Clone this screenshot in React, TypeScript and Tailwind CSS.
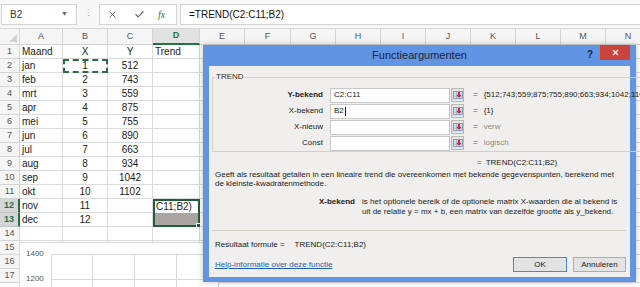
import { X, Check } from "lucide-react";

const COLS = ["A", "B", "C", "D", "E", "F", "G", "H", "I", "J", "K", "L", "M", "N"];

// Maand / X / Y / Trend
const data: string[][] = [
  ["Maand", "X", "Y", "Trend"],
  ["jan", "1", "512"],
  ["feb", "2", "743"],
  ["mrt", "3", "559"],
  ["apr", "4", "875"],
  ["mei", "5", "755"],
  ["jun", "6", "890"],
  ["jul", "7", "663"],
  ["aug", "8", "934"],
  ["sep", "9", "1042"],
  ["okt", "10", "1102"],
  ["nov", "11", ""],
  ["dec", "12", ""],
];

const args = [
  { label: "Y-bekend", value: "C2:C11", result: "{512;743;559;875;755;890;663;934;1042;1102}", bold: true, muted: false },
  { label: "X-bekend", value: "B2", result: "{1}", bold: false, muted: false },
  { label: "X-nieuw", value: "", result: "verw", bold: false, muted: true },
  { label: "Const", value: "", result: "logisch", bold: false, muted: true },
];

function RangeButton() {
  return (
    <div className="ml-[1px] w-[13px] h-[14px] border border-[#b9b9b9] bg-[#e6e6e6] flex items-center justify-center shrink-0">
      <svg width="10" height="10" viewBox="0 0 10 10">
        <rect x="0.5" y="1.5" width="9" height="7" fill="#dfe8f5" stroke="#6b86b3" strokeWidth="0.8" />
        <line x1="0.5" y1="4" x2="9.5" y2="4" stroke="#8aa0c4" strokeWidth="0.6" />
        <line x1="0.5" y1="6.3" x2="9.5" y2="6.3" stroke="#8aa0c4" strokeWidth="0.6" />
        <line x1="3.5" y1="1.5" x2="3.5" y2="8.5" stroke="#8aa0c4" strokeWidth="0.6" />
        <path d="M5 2 L5 5 L3.5 5 L6 8 L8.5 5 L7 5 L7 2 Z" fill="#d8262b" />
      </svg>
    </div>
  );
}

function Sheet() {
  const rows = Array.from({ length: 17 }, (_, i) => i + 1);
  return (
    <div className="grid grid-cols-[20px_43px_45px_45px_47px_45px_46px_45px_45px_45px_45px_45px_45px_45px_45px] font-['Liberation_Sans',Arial,sans-serif]">
      {/* header row */}
      <div className="h-[16px] bg-[#f5f5f5] border-r border-b border-[#d4d4d4] relative">
        <div className="absolute right-[2px] bottom-[2px] w-0 h-0 border-l-[8px] border-l-transparent border-b-[8px] border-b-[#d0d0d0]" />
      </div>
      {COLS.map((c) =>
        c === "D" ? (
          <div key={c} className="h-[16px] bg-[#e1e1e1] border-r border-[#d4d4d4] border-b-2 border-b-[#217346] text-[9px] text-[#217346] font-bold flex items-center justify-center">
            {c}
          </div>
        ) : (
          <div key={c} className="h-[16px] bg-[#f5f5f5] border-r border-b border-[#d4d4d4] text-[9px] text-[#555] flex items-center justify-center">
            {c}
          </div>
        )
      )}

      {rows.map((r) => {
        const row = data[r - 1] || [];
        const sel = r === 12 || r === 13;
        return [
          <div
            key={`h${r}`}
            className={
              sel
                ? "h-[14px] bg-[#d6d6d6] border-b border-[#c6c6c6] border-r-2 border-r-[#217346] text-[9px] text-[#217346] font-bold flex items-center justify-center"
                : "h-[14px] bg-[#f5f5f5] border-r border-b border-[#d4d4d4] text-[9px] text-[#555] flex items-center justify-center"
            }
          >
            {r}
          </div>,
          ...COLS.map((c, ci) => {
            const v = row[ci] ?? "";
            let cls = "h-[14px] border-r border-b border-[#dadada] bg-white text-[10px] text-[#222] leading-[13px] px-[2px] whitespace-nowrap overflow-visible relative";
            if (ci === 1 || ci === 2) cls += " text-center";
            if (r === 2 && c === "B") cls += " outline-2 outline-dashed outline-[#2f6b45] -outline-offset-2";
            if (c === "D" && r === 12) {
              return (
                <div key={`${r}${c}`} className="h-[14px] bg-white border-2 border-b-0 border-[#1f5f3a] text-[10px] text-[#222] leading-[12px] px-[1px] whitespace-nowrap">
                  C11;B2)
                </div>
              );
            }
            if (c === "D" && r === 13) {
              return (
                <div key={`${r}${c}`} className="h-[14px] bg-[#aaa5a1] border-2 border-t-0 border-[#1f5f3a] relative">
                  <div className="absolute -right-[3px] -bottom-[3px] w-[5px] h-[5px] bg-[#1f5f3a] border border-white" />
                </div>
              );
            }
            return (
              <div key={`${r}${c}`} className={cls}>
                {v}
              </div>
            );
          }),
        ];
      })}
    </div>
  );
}

function Chart() {
  return (
    <div className="absolute left-[19px] top-[242px] w-[200px] h-[45px] bg-white border-l border-t border-[#d9d9d9]">
      <svg width="200" height="45" className="font-['Liberation_Sans',Arial,sans-serif]">
        <text x="6" y="13" fontSize="8" fill="#555">1400</text>
        <text x="6" y="38" fontSize="8" fill="#555">1200</text>
        <line x1="31" y1="11.5" x2="200" y2="11.5" stroke="#d9d9d9" />
        <line x1="31" y1="36.5" x2="200" y2="36.5" stroke="#d9d9d9" />
        {[31, 72, 114, 156, 198].map((x) => (
          <line key={x} x1={x + 0.5} y1="11" x2={x + 0.5} y2="45" stroke="#d9d9d9" />
        ))}
      </svg>
    </div>
  );
}

function Dialog() {
  return (
    <div className="absolute left-[203px] top-[45px] w-[433px] h-[237px] bg-[#6195e3] px-[6px] pb-[5px] flex flex-col font-['Liberation_Sans',Arial,sans-serif] shadow-[0_0_6px_rgba(0,0,0,0.25)]">
      {/* title bar */}
      <div className="h-[21px] relative flex items-center justify-center shrink-0">
        <span className="text-[11px] text-[#1b2433]">Functieargumenten</span>
        <div className="absolute right-0 top-0 flex items-start">
          <span className="text-[10px] font-bold text-[#1b2433] mr-[7px] mt-[2px]">?</span>
          <div className="w-[30px] h-[15px] bg-[#c9443d] flex items-center justify-center">
            <X size={9} strokeWidth={3} color="#ffffff" />
          </div>
        </div>
      </div>

      {/* body */}
      <div className="flex-1 bg-[#f0efed] flex flex-col text-[8px] text-[#1a1a1a]">
        <fieldset className="mt-[6px] ml-[3px] mr-[5px] border border-[#d3d0ca] pb-0">
          <legend className="ml-[2px] px-[1px] leading-[10px] text-[8px] text-[#333]">TREND</legend>
          <div className="mt-[5px] flex flex-col">
            {args.map((a) => (
              <div key={a.label} className="h-[16px] flex items-center">
                <div className={`w-[110px] text-right shrink-0 ${a.bold ? "font-bold" : ""}`}>{a.label}</div>
                <div className="ml-[7px] w-[120px] h-[15px] bg-white border border-[#c9c9c9] flex items-center px-[3px] shrink-0">
                  {a.value}
                  {a.label === "X-bekend" && <span className="ml-[1px] w-px h-[9px] bg-[#111]" />}
                </div>
                <RangeButton />
                <span className="ml-[9px] text-[#555]">=</span>
                <span className={`ml-[6px] mr-[2px] flex-1 min-w-0 overflow-hidden whitespace-nowrap ${a.muted ? "text-[#8a8a8a]" : ""}`}>
                  {a.result}
                </span>
              </div>
            ))}
          </div>
        </fieldset>

        <div className="mt-[6px] leading-[10px] ml-[268px] flex">
          <span className="text-[#555]">=</span>
          <span className="ml-[4px]">TREND(C2:C11;B2)</span>
        </div>

        <div className="mt-[2px] ml-[6px] mr-[5px] leading-[9px]">
          Geeft als resultaat getallen in een lineaire trend die overeenkomen met bekende gegevenspunten, berekend met
          de kleinste-kwadratenmethode.
        </div>

        <div className="mt-[9px] flex leading-[10px]">
          <div className="w-[146px] text-right font-bold shrink-0">X-bekend</div>
          <div className="ml-[7px] mr-[4px]">
            is het optionele bereik of de optionele matrix X-waarden die al bekend is uit de relatie y = mx + b, een matrix van dezelfde grootte als y_bekend.
          </div>
        </div>

        <div className="mt-auto ml-[3px] mr-[4px] border-t border-[#d3d0ca]" />
        <div className="mt-[9px] ml-[6px] leading-[10px] flex">
          <span>Resultaat formule =</span>
          <span className="ml-[10px]">TREND(C2:C11;B2)</span>
        </div>
        <div className="mt-[7px] mb-[5px] ml-[6px] mr-[4px] flex items-center">
          <span className="text-[#1f5fb0] underline leading-[10px]">Help-informatie over deze functie</span>
          <div className="ml-auto w-[54px] h-[15px] border border-[#3c8fdc] bg-[#e3e3e3] flex items-center justify-center">OK</div>
          <div className="ml-[6px] w-[53px] h-[15px] border border-[#adadad] bg-[#e3e3e3] flex items-center justify-center">Annuleren</div>
        </div>
      </div>
    </div>
  );
}

export default function App() {
  return (
    <div className="w-[640px] h-[287px] overflow-hidden relative bg-white font-['Liberation_Sans',Arial,sans-serif]">
      {/* formula bar */}
      <div className="h-[29px] bg-[#f7f7f7] border-b border-[#d8d8d8] flex items-center">
        <div className="ml-[1px] w-[76px] h-[21px] bg-white border border-[#d4d4d4] flex items-center px-[8px] text-[10px] text-[#333]">
          B2
          <span className="ml-auto text-[7px] text-[#666]">▼</span>
        </div>
        <span className="ml-[7px] text-[9px] text-[#aaa]">⋮</span>
        <div className="ml-[6px] w-[78px] h-[21px] bg-white border border-[#d4d4d4] flex items-center">
          <X size={11} strokeWidth={2} color="#666" className="ml-[7px]" />
          <Check size={11} strokeWidth={2.5} color="#666" className="ml-[16px]" />
          <span className="ml-[13px] text-[10px] italic text-[#2f7a3f] font-['Liberation_Serif',serif]">fx</span>
        </div>
        <div className="ml-[3px] flex-1 h-[21px] bg-white border border-[#d4d4d4] border-r-0 flex items-center px-[8px] text-[10px] text-[#111]">
          =TREND(C2:C11;B2)
        </div>
      </div>
      <Sheet />
      <Chart />
      <Dialog />
    </div>
  );
}
